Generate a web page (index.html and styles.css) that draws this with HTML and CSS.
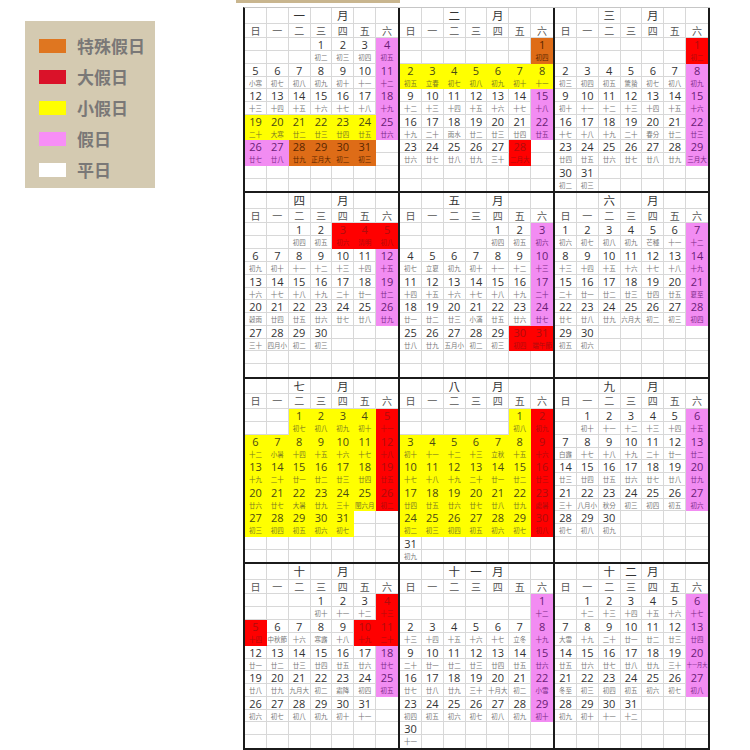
FILE: index.html
```html
<!DOCTYPE html>
<html lang="zh-Hant">
<head>
<meta charset="utf-8">
<title>2025 行事曆</title>
<link rel="stylesheet" href="styles.css">
</head>
<body>
<div class="page">
  <div class="legend">
    <div class="item"><span class="sw sw-o"></span>特殊假日</div>
    <div class="item"><span class="sw sw-r"></span>大假日</div>
    <div class="item"><span class="sw sw-y"></span>小假日</div>
    <div class="item"><span class="sw sw-p"></span>假日</div>
    <div class="item"><span class="sw sw-w"></span>平日</div>
  </div>
  <div class="main">
    <div class="strip"></div>
    <div class="cal">
      <!-- 一月 -->
      <div class="month">
        <div class="t"></div><div class="t"></div><div class="t">一</div><div class="t"></div><div class="t">月</div><div class="t"></div><div class="t"></div>
        <div class="w">日</div><div class="w">一</div><div class="w">二</div><div class="w">三</div><div class="w">四</div><div class="w">五</div><div class="w">六</div>
        <div class="d"></div><div class="d"></div><div class="d"></div><div class="d"><b>1</b><i>初二</i></div><div class="d"><b>2</b><i>初三</i></div><div class="d"><b>3</b><i>初四</i></div><div class="d p"><b>4</b><i>初五</i></div>
        <div class="d"><b>5</b><i>小寒</i></div><div class="d"><b>6</b><i>初七</i></div><div class="d"><b>7</b><i>初八</i></div><div class="d"><b>8</b><i>初九</i></div><div class="d"><b>9</b><i>初十</i></div><div class="d"><b>10</b><i>十一</i></div><div class="d p"><b>11</b><i>十二</i></div>
        <div class="d"><b>12</b><i>十三</i></div><div class="d"><b>13</b><i>十四</i></div><div class="d"><b>14</b><i>十五</i></div><div class="d"><b>15</b><i>十六</i></div><div class="d"><b>16</b><i>十七</i></div><div class="d"><b>17</b><i>十八</i></div><div class="d p"><b>18</b><i>十九</i></div>
        <div class="d y"><b>19</b><i>二十</i></div><div class="d y"><b>20</b><i>大寒</i></div><div class="d y"><b>21</b><i>廿二</i></div><div class="d y"><b>22</b><i>廿三</i></div><div class="d y"><b>23</b><i>廿四</i></div><div class="d y"><b>24</b><i>廿五</i></div><div class="d p"><b>25</b><i>廿六</i></div>
        <div class="d p"><b>26</b><i>廿七</i></div><div class="d p"><b>27</b><i>廿八</i></div><div class="d o"><b>28</b><i>廿九</i></div><div class="d o"><b>29</b><i>正月大</i></div><div class="d o"><b>30</b><i>初二</i></div><div class="d o"><b>31</b><i>初三</i></div><div class="d"></div>
        <div class="d"></div><div class="d"></div><div class="d"></div><div class="d"></div><div class="d"></div><div class="d"></div><div class="d"></div>
      </div>
      <!-- 二月 -->
      <div class="month">
        <div class="t"></div><div class="t"></div><div class="t">二</div><div class="t"></div><div class="t">月</div><div class="t"></div><div class="t"></div>
        <div class="w">日</div><div class="w">一</div><div class="w">二</div><div class="w">三</div><div class="w">四</div><div class="w">五</div><div class="w">六</div>
        <div class="d"></div><div class="d"></div><div class="d"></div><div class="d"></div><div class="d"></div><div class="d"></div><div class="d o"><b>1</b><i>初四</i></div>
        <div class="d y"><b>2</b><i>初五</i></div><div class="d y"><b>3</b><i>立春</i></div><div class="d y"><b>4</b><i>初七</i></div><div class="d y"><b>5</b><i>初八</i></div><div class="d y"><b>6</b><i>初九</i></div><div class="d y"><b>7</b><i>初十</i></div><div class="d y"><b>8</b><i>十一</i></div>
        <div class="d"><b>9</b><i>十二</i></div><div class="d"><b>10</b><i>十三</i></div><div class="d"><b>11</b><i>十四</i></div><div class="d"><b>12</b><i>十五</i></div><div class="d"><b>13</b><i>十六</i></div><div class="d"><b>14</b><i>十七</i></div><div class="d p"><b>15</b><i>十八</i></div>
        <div class="d"><b>16</b><i>十九</i></div><div class="d"><b>17</b><i>二十</i></div><div class="d"><b>18</b><i>雨水</i></div><div class="d"><b>19</b><i>廿二</i></div><div class="d"><b>20</b><i>廿三</i></div><div class="d"><b>21</b><i>廿四</i></div><div class="d p"><b>22</b><i>廿五</i></div>
        <div class="d"><b>23</b><i>廿六</i></div><div class="d"><b>24</b><i>廿七</i></div><div class="d"><b>25</b><i>廿八</i></div><div class="d"><b>26</b><i>廿九</i></div><div class="d"><b>27</b><i>三十</i></div><div class="d r"><b>28</b><i>二月大</i></div><div class="d"></div>
        <div class="d"></div><div class="d"></div><div class="d"></div><div class="d"></div><div class="d"></div><div class="d"></div><div class="d"></div>
      </div>
      <!-- 三月 -->
      <div class="month">
        <div class="t"></div><div class="t"></div><div class="t">三</div><div class="t"></div><div class="t">月</div><div class="t"></div><div class="t"></div>
        <div class="w">日</div><div class="w">一</div><div class="w">二</div><div class="w">三</div><div class="w">四</div><div class="w">五</div><div class="w">六</div>
        <div class="d"></div><div class="d"></div><div class="d"></div><div class="d"></div><div class="d"></div><div class="d"></div><div class="d r"><b>1</b><i>初二</i></div>
        <div class="d"><b>2</b><i>初三</i></div><div class="d"><b>3</b><i>初四</i></div><div class="d"><b>4</b><i>初五</i></div><div class="d"><b>5</b><i>驚蟄</i></div><div class="d"><b>6</b><i>初七</i></div><div class="d"><b>7</b><i>初八</i></div><div class="d p"><b>8</b><i>初九</i></div>
        <div class="d"><b>9</b><i>初十</i></div><div class="d"><b>10</b><i>十一</i></div><div class="d"><b>11</b><i>十二</i></div><div class="d"><b>12</b><i>十三</i></div><div class="d"><b>13</b><i>十四</i></div><div class="d"><b>14</b><i>十五</i></div><div class="d p"><b>15</b><i>十六</i></div>
        <div class="d"><b>16</b><i>十七</i></div><div class="d"><b>17</b><i>十八</i></div><div class="d"><b>18</b><i>十九</i></div><div class="d"><b>19</b><i>二十</i></div><div class="d"><b>20</b><i>春分</i></div><div class="d"><b>21</b><i>廿二</i></div><div class="d p"><b>22</b><i>廿三</i></div>
        <div class="d"><b>23</b><i>廿四</i></div><div class="d"><b>24</b><i>廿五</i></div><div class="d"><b>25</b><i>廿六</i></div><div class="d"><b>26</b><i>廿七</i></div><div class="d"><b>27</b><i>廿八</i></div><div class="d"><b>28</b><i>廿九</i></div><div class="d p"><b>29</b><i>三月大</i></div>
        <div class="d"><b>30</b><i>初二</i></div><div class="d"><b>31</b><i>初三</i></div><div class="d"></div><div class="d"></div><div class="d"></div><div class="d"></div><div class="d"></div>
      </div>
      <!-- 四月 -->
      <div class="month">
        <div class="t"></div><div class="t"></div><div class="t">四</div><div class="t"></div><div class="t">月</div><div class="t"></div><div class="t"></div>
        <div class="w">日</div><div class="w">一</div><div class="w">二</div><div class="w">三</div><div class="w">四</div><div class="w">五</div><div class="w">六</div>
        <div class="d"></div><div class="d"></div><div class="d"><b>1</b><i>初四</i></div><div class="d"><b>2</b><i>初五</i></div><div class="d r"><b>3</b><i>初六</i></div><div class="d r"><b>4</b><i>清明</i></div><div class="d r"><b>5</b><i>初八</i></div>
        <div class="d"><b>6</b><i>初九</i></div><div class="d"><b>7</b><i>初十</i></div><div class="d"><b>8</b><i>十一</i></div><div class="d"><b>9</b><i>十二</i></div><div class="d"><b>10</b><i>十三</i></div><div class="d"><b>11</b><i>十四</i></div><div class="d p"><b>12</b><i>十五</i></div>
        <div class="d"><b>13</b><i>十六</i></div><div class="d"><b>14</b><i>十七</i></div><div class="d"><b>15</b><i>十八</i></div><div class="d"><b>16</b><i>十九</i></div><div class="d"><b>17</b><i>二十</i></div><div class="d"><b>18</b><i>廿一</i></div><div class="d p"><b>19</b><i>廿二</i></div>
        <div class="d"><b>20</b><i>穀雨</i></div><div class="d"><b>21</b><i>廿四</i></div><div class="d"><b>22</b><i>廿五</i></div><div class="d"><b>23</b><i>廿六</i></div><div class="d"><b>24</b><i>廿七</i></div><div class="d"><b>25</b><i>廿八</i></div><div class="d p"><b>26</b><i>廿九</i></div>
        <div class="d"><b>27</b><i>三十</i></div><div class="d"><b>28</b><i>四月小</i></div><div class="d"><b>29</b><i>初二</i></div><div class="d"><b>30</b><i>初三</i></div><div class="d"></div><div class="d"></div><div class="d"></div>
        <div class="d"></div><div class="d"></div><div class="d"></div><div class="d"></div><div class="d"></div><div class="d"></div><div class="d"></div>
      </div>
      <!-- 五月 -->
      <div class="month">
        <div class="t"></div><div class="t"></div><div class="t">五</div><div class="t"></div><div class="t">月</div><div class="t"></div><div class="t"></div>
        <div class="w">日</div><div class="w">一</div><div class="w">二</div><div class="w">三</div><div class="w">四</div><div class="w">五</div><div class="w">六</div>
        <div class="d"></div><div class="d"></div><div class="d"></div><div class="d"></div><div class="d"><b>1</b><i>初四</i></div><div class="d"><b>2</b><i>初五</i></div><div class="d p"><b>3</b><i>初六</i></div>
        <div class="d"><b>4</b><i>初七</i></div><div class="d"><b>5</b><i>立夏</i></div><div class="d"><b>6</b><i>初九</i></div><div class="d"><b>7</b><i>初十</i></div><div class="d"><b>8</b><i>十一</i></div><div class="d"><b>9</b><i>十二</i></div><div class="d p"><b>10</b><i>十三</i></div>
        <div class="d"><b>11</b><i>十四</i></div><div class="d"><b>12</b><i>十五</i></div><div class="d"><b>13</b><i>十六</i></div><div class="d"><b>14</b><i>十七</i></div><div class="d"><b>15</b><i>十八</i></div><div class="d"><b>16</b><i>十九</i></div><div class="d p"><b>17</b><i>二十</i></div>
        <div class="d"><b>18</b><i>廿一</i></div><div class="d"><b>19</b><i>廿二</i></div><div class="d"><b>20</b><i>廿三</i></div><div class="d"><b>21</b><i>小滿</i></div><div class="d"><b>22</b><i>廿五</i></div><div class="d"><b>23</b><i>廿六</i></div><div class="d p"><b>24</b><i>廿七</i></div>
        <div class="d"><b>25</b><i>廿八</i></div><div class="d"><b>26</b><i>廿九</i></div><div class="d"><b>27</b><i>五月小</i></div><div class="d"><b>28</b><i>初二</i></div><div class="d"><b>29</b><i>初三</i></div><div class="d r"><b>30</b><i>初四</i></div><div class="d r"><b>31</b><i>端午節</i></div>
        <div class="d"></div><div class="d"></div><div class="d"></div><div class="d"></div><div class="d"></div><div class="d"></div><div class="d"></div>
      </div>
      <!-- 六月 -->
      <div class="month">
        <div class="t"></div><div class="t"></div><div class="t">六</div><div class="t"></div><div class="t">月</div><div class="t"></div><div class="t"></div>
        <div class="w">日</div><div class="w">一</div><div class="w">二</div><div class="w">三</div><div class="w">四</div><div class="w">五</div><div class="w">六</div>
        <div class="d"><b>1</b><i>初六</i></div><div class="d"><b>2</b><i>初七</i></div><div class="d"><b>3</b><i>初八</i></div><div class="d"><b>4</b><i>初九</i></div><div class="d"><b>5</b><i>芒種</i></div><div class="d"><b>6</b><i>十一</i></div><div class="d p"><b>7</b><i>十二</i></div>
        <div class="d"><b>8</b><i>十三</i></div><div class="d"><b>9</b><i>十四</i></div><div class="d"><b>10</b><i>十五</i></div><div class="d"><b>11</b><i>十六</i></div><div class="d"><b>12</b><i>十七</i></div><div class="d"><b>13</b><i>十八</i></div><div class="d p"><b>14</b><i>十九</i></div>
        <div class="d"><b>15</b><i>二十</i></div><div class="d"><b>16</b><i>廿一</i></div><div class="d"><b>17</b><i>廿二</i></div><div class="d"><b>18</b><i>廿三</i></div><div class="d"><b>19</b><i>廿四</i></div><div class="d"><b>20</b><i>廿五</i></div><div class="d p"><b>21</b><i>夏至</i></div>
        <div class="d"><b>22</b><i>廿七</i></div><div class="d"><b>23</b><i>廿八</i></div><div class="d"><b>24</b><i>廿九</i></div><div class="d"><b>25</b><i>六月大</i></div><div class="d"><b>26</b><i>初二</i></div><div class="d"><b>27</b><i>初三</i></div><div class="d p"><b>28</b><i>初四</i></div>
        <div class="d"><b>29</b><i>初五</i></div><div class="d"><b>30</b><i>初六</i></div><div class="d"></div><div class="d"></div><div class="d"></div><div class="d"></div><div class="d"></div>
        <div class="d"></div><div class="d"></div><div class="d"></div><div class="d"></div><div class="d"></div><div class="d"></div><div class="d"></div>
      </div>
      <!-- 七月 -->
      <div class="month">
        <div class="t"></div><div class="t"></div><div class="t">七</div><div class="t"></div><div class="t">月</div><div class="t"></div><div class="t"></div>
        <div class="w">日</div><div class="w">一</div><div class="w">二</div><div class="w">三</div><div class="w">四</div><div class="w">五</div><div class="w">六</div>
        <div class="d"></div><div class="d"></div><div class="d y"><b>1</b><i>初七</i></div><div class="d y"><b>2</b><i>初八</i></div><div class="d y"><b>3</b><i>初九</i></div><div class="d y"><b>4</b><i>初十</i></div><div class="d r"><b>5</b><i>十一</i></div>
        <div class="d y"><b>6</b><i>十二</i></div><div class="d y"><b>7</b><i>小暑</i></div><div class="d y"><b>8</b><i>十四</i></div><div class="d y"><b>9</b><i>十五</i></div><div class="d y"><b>10</b><i>十六</i></div><div class="d y"><b>11</b><i>十七</i></div><div class="d r"><b>12</b><i>十八</i></div>
        <div class="d y"><b>13</b><i>十九</i></div><div class="d y"><b>14</b><i>二十</i></div><div class="d y"><b>15</b><i>廿一</i></div><div class="d y"><b>16</b><i>廿二</i></div><div class="d y"><b>17</b><i>廿三</i></div><div class="d y"><b>18</b><i>廿四</i></div><div class="d r"><b>19</b><i>廿五</i></div>
        <div class="d y"><b>20</b><i>廿六</i></div><div class="d y"><b>21</b><i>廿七</i></div><div class="d y"><b>22</b><i>大暑</i></div><div class="d y"><b>23</b><i>廿九</i></div><div class="d y"><b>24</b><i>三十</i></div><div class="d y"><b>25</b><i>閏六月</i></div><div class="d r"><b>26</b><i>初二</i></div>
        <div class="d y"><b>27</b><i>初三</i></div><div class="d y"><b>28</b><i>初四</i></div><div class="d y"><b>29</b><i>初五</i></div><div class="d y"><b>30</b><i>初六</i></div><div class="d y"><b>31</b><i>初七</i></div><div class="d"></div><div class="d"></div>
        <div class="d"></div><div class="d"></div><div class="d"></div><div class="d"></div><div class="d"></div><div class="d"></div><div class="d"></div>
      </div>
      <!-- 八月 -->
      <div class="month">
        <div class="t"></div><div class="t"></div><div class="t">八</div><div class="t"></div><div class="t">月</div><div class="t"></div><div class="t"></div>
        <div class="w">日</div><div class="w">一</div><div class="w">二</div><div class="w">三</div><div class="w">四</div><div class="w">五</div><div class="w">六</div>
        <div class="d"></div><div class="d"></div><div class="d"></div><div class="d"></div><div class="d"></div><div class="d y"><b>1</b><i>初八</i></div><div class="d r"><b>2</b><i>初九</i></div>
        <div class="d y"><b>3</b><i>初十</i></div><div class="d y"><b>4</b><i>十一</i></div><div class="d y"><b>5</b><i>十二</i></div><div class="d y"><b>6</b><i>十三</i></div><div class="d y"><b>7</b><i>立秋</i></div><div class="d y"><b>8</b><i>十五</i></div><div class="d r"><b>9</b><i>十六</i></div>
        <div class="d y"><b>10</b><i>十七</i></div><div class="d y"><b>11</b><i>十八</i></div><div class="d y"><b>12</b><i>十九</i></div><div class="d y"><b>13</b><i>二十</i></div><div class="d y"><b>14</b><i>廿一</i></div><div class="d y"><b>15</b><i>廿二</i></div><div class="d r"><b>16</b><i>廿三</i></div>
        <div class="d y"><b>17</b><i>廿四</i></div><div class="d y"><b>18</b><i>廿五</i></div><div class="d y"><b>19</b><i>廿六</i></div><div class="d y"><b>20</b><i>廿七</i></div><div class="d y"><b>21</b><i>廿八</i></div><div class="d y"><b>22</b><i>廿九</i></div><div class="d r"><b>23</b><i>處暑</i></div>
        <div class="d y"><b>24</b><i>初二</i></div><div class="d y"><b>25</b><i>初三</i></div><div class="d y"><b>26</b><i>初四</i></div><div class="d y"><b>27</b><i>初五</i></div><div class="d y"><b>28</b><i>初六</i></div><div class="d y"><b>29</b><i>初七</i></div><div class="d r"><b>30</b><i>初八</i></div>
        <div class="d"><b>31</b><i>初九</i></div><div class="d"></div><div class="d"></div><div class="d"></div><div class="d"></div><div class="d"></div><div class="d"></div>
      </div>
      <!-- 九月 -->
      <div class="month">
        <div class="t"></div><div class="t"></div><div class="t">九</div><div class="t"></div><div class="t">月</div><div class="t"></div><div class="t"></div>
        <div class="w">日</div><div class="w">一</div><div class="w">二</div><div class="w">三</div><div class="w">四</div><div class="w">五</div><div class="w">六</div>
        <div class="d"></div><div class="d"><b>1</b><i>初十</i></div><div class="d"><b>2</b><i>十一</i></div><div class="d"><b>3</b><i>十二</i></div><div class="d"><b>4</b><i>十三</i></div><div class="d"><b>5</b><i>十四</i></div><div class="d p"><b>6</b><i>十五</i></div>
        <div class="d"><b>7</b><i>白露</i></div><div class="d"><b>8</b><i>十七</i></div><div class="d"><b>9</b><i>十八</i></div><div class="d"><b>10</b><i>十九</i></div><div class="d"><b>11</b><i>二十</i></div><div class="d"><b>12</b><i>廿一</i></div><div class="d p"><b>13</b><i>廿二</i></div>
        <div class="d"><b>14</b><i>廿三</i></div><div class="d"><b>15</b><i>廿四</i></div><div class="d"><b>16</b><i>廿五</i></div><div class="d"><b>17</b><i>廿六</i></div><div class="d"><b>18</b><i>廿七</i></div><div class="d"><b>19</b><i>廿八</i></div><div class="d p"><b>20</b><i>廿九</i></div>
        <div class="d"><b>21</b><i>三十</i></div><div class="d"><b>22</b><i>八月小</i></div><div class="d"><b>23</b><i>秋分</i></div><div class="d"><b>24</b><i>初三</i></div><div class="d"><b>25</b><i>初四</i></div><div class="d"><b>26</b><i>初五</i></div><div class="d p"><b>27</b><i>初六</i></div>
        <div class="d"><b>28</b><i>初七</i></div><div class="d"><b>29</b><i>初八</i></div><div class="d"><b>30</b><i>初九</i></div><div class="d"></div><div class="d"></div><div class="d"></div><div class="d"></div>
        <div class="d"></div><div class="d"></div><div class="d"></div><div class="d"></div><div class="d"></div><div class="d"></div><div class="d"></div>
      </div>
      <!-- 十月 -->
      <div class="month">
        <div class="t"></div><div class="t"></div><div class="t">十</div><div class="t"></div><div class="t">月</div><div class="t"></div><div class="t"></div>
        <div class="w">日</div><div class="w">一</div><div class="w">二</div><div class="w">三</div><div class="w">四</div><div class="w">五</div><div class="w">六</div>
        <div class="d"></div><div class="d"></div><div class="d"></div><div class="d"><b>1</b><i>初十</i></div><div class="d"><b>2</b><i>十一</i></div><div class="d"><b>3</b><i>十二</i></div><div class="d r"><b>4</b><i>十三</i></div>
        <div class="d r"><b>5</b><i>十四</i></div><div class="d"><b>6</b><i>中秋節</i></div><div class="d"><b>7</b><i>十六</i></div><div class="d"><b>8</b><i>寒露</i></div><div class="d"><b>9</b><i>十八</i></div><div class="d r"><b>10</b><i>十九</i></div><div class="d r"><b>11</b><i>二十</i></div>
        <div class="d"><b>12</b><i>廿一</i></div><div class="d"><b>13</b><i>廿二</i></div><div class="d"><b>14</b><i>廿三</i></div><div class="d"><b>15</b><i>廿四</i></div><div class="d"><b>16</b><i>廿五</i></div><div class="d"><b>17</b><i>廿六</i></div><div class="d p"><b>18</b><i>廿七</i></div>
        <div class="d"><b>19</b><i>廿八</i></div><div class="d"><b>20</b><i>廿九</i></div><div class="d"><b>21</b><i>九月大</i></div><div class="d"><b>22</b><i>初二</i></div><div class="d"><b>23</b><i>霜降</i></div><div class="d"><b>24</b><i>初四</i></div><div class="d p"><b>25</b><i>初五</i></div>
        <div class="d"><b>26</b><i>初六</i></div><div class="d"><b>27</b><i>初七</i></div><div class="d"><b>28</b><i>初八</i></div><div class="d"><b>29</b><i>初九</i></div><div class="d"><b>30</b><i>初十</i></div><div class="d"><b>31</b><i>十一</i></div><div class="d"></div>
        <div class="d"></div><div class="d"></div><div class="d"></div><div class="d"></div><div class="d"></div><div class="d"></div><div class="d"></div>
      </div>
      <!-- 十一月 -->
      <div class="month">
        <div class="t"></div><div class="t"></div><div class="t">十</div><div class="t">一</div><div class="t">月</div><div class="t"></div><div class="t"></div>
        <div class="w">日</div><div class="w">一</div><div class="w">二</div><div class="w">三</div><div class="w">四</div><div class="w">五</div><div class="w">六</div>
        <div class="d"></div><div class="d"></div><div class="d"></div><div class="d"></div><div class="d"></div><div class="d"></div><div class="d p"><b>1</b><i>十二</i></div>
        <div class="d"><b>2</b><i>十三</i></div><div class="d"><b>3</b><i>十四</i></div><div class="d"><b>4</b><i>十五</i></div><div class="d"><b>5</b><i>十六</i></div><div class="d"><b>6</b><i>十七</i></div><div class="d"><b>7</b><i>立冬</i></div><div class="d p"><b>8</b><i>十九</i></div>
        <div class="d"><b>9</b><i>二十</i></div><div class="d"><b>10</b><i>廿一</i></div><div class="d"><b>11</b><i>廿二</i></div><div class="d"><b>12</b><i>廿三</i></div><div class="d"><b>13</b><i>廿四</i></div><div class="d"><b>14</b><i>廿五</i></div><div class="d p"><b>15</b><i>廿六</i></div>
        <div class="d"><b>16</b><i>廿七</i></div><div class="d"><b>17</b><i>廿八</i></div><div class="d"><b>18</b><i>廿九</i></div><div class="d"><b>19</b><i>三十</i></div><div class="d"><b>20</b><i>十月大</i></div><div class="d"><b>21</b><i>初二</i></div><div class="d p"><b>22</b><i>小雪</i></div>
        <div class="d"><b>23</b><i>初四</i></div><div class="d"><b>24</b><i>初五</i></div><div class="d"><b>25</b><i>初六</i></div><div class="d"><b>26</b><i>初七</i></div><div class="d"><b>27</b><i>初八</i></div><div class="d"><b>28</b><i>初九</i></div><div class="d p"><b>29</b><i>初十</i></div>
        <div class="d"><b>30</b><i>十一</i></div><div class="d"></div><div class="d"></div><div class="d"></div><div class="d"></div><div class="d"></div><div class="d"></div>
      </div>
      <!-- 十二月 -->
      <div class="month">
        <div class="t"></div><div class="t"></div><div class="t">十</div><div class="t">二</div><div class="t">月</div><div class="t"></div><div class="t"></div>
        <div class="w">日</div><div class="w">一</div><div class="w">二</div><div class="w">三</div><div class="w">四</div><div class="w">五</div><div class="w">六</div>
        <div class="d"></div><div class="d"><b>1</b><i>十二</i></div><div class="d"><b>2</b><i>十三</i></div><div class="d"><b>3</b><i>十四</i></div><div class="d"><b>4</b><i>十五</i></div><div class="d"><b>5</b><i>十六</i></div><div class="d p"><b>6</b><i>十七</i></div>
        <div class="d"><b>7</b><i>大雪</i></div><div class="d"><b>8</b><i>十九</i></div><div class="d"><b>9</b><i>二十</i></div><div class="d"><b>10</b><i>廿一</i></div><div class="d"><b>11</b><i>廿二</i></div><div class="d"><b>12</b><i>廿三</i></div><div class="d p"><b>13</b><i>廿四</i></div>
        <div class="d"><b>14</b><i>廿五</i></div><div class="d"><b>15</b><i>廿六</i></div><div class="d"><b>16</b><i>廿七</i></div><div class="d"><b>17</b><i>廿八</i></div><div class="d"><b>18</b><i>廿九</i></div><div class="d"><b>19</b><i>三十</i></div><div class="d p"><b>20</b><i class="sm">十一月大</i></div>
        <div class="d"><b>21</b><i>冬至</i></div><div class="d"><b>22</b><i>初三</i></div><div class="d"><b>23</b><i>初四</i></div><div class="d"><b>24</b><i>初五</i></div><div class="d"><b>25</b><i>初六</i></div><div class="d"><b>26</b><i>初七</i></div><div class="d p"><b>27</b><i>初八</i></div>
        <div class="d"><b>28</b><i>初九</i></div><div class="d"><b>29</b><i>初十</i></div><div class="d"><b>30</b><i>十一</i></div><div class="d"><b>31</b><i>十二</i></div><div class="d"></div><div class="d"></div><div class="d"></div>
        <div class="d"></div><div class="d"></div><div class="d"></div><div class="d"></div><div class="d"></div><div class="d"></div><div class="d"></div>
      </div>
    </div>
  </div>
</div>
</body>
</html>
```

FILE: styles.css
```css
html, body {
  margin: 0;
  background: #fff;
}
body {
  font-family: "Noto Sans", "Noto Sans CJK TC", sans-serif;
}
.page {
  display: flex;
  align-items: flex-start;
}
.legend {
  margin: 21px 0 0 25px;
  width: 130px;
  height: 167px;
  box-sizing: border-box;
  padding: 9px 0 0 14px;
  background: #d4cab1;
}
.item {
  display: flex;
  align-items: center;
  gap: 11px;
  height: 31px;
  font-family: "Noto Sans CJK TC", sans-serif;
  font-size: 17px;
  font-weight: bold;
  color: #7a7877;
}
.sw {
  width: 27px;
  height: 14px;
  flex: none;
}
.sw-o { background: #df7620; }
.sw-r { background: #da1229; }
.sw-y { background: #ffff00; }
.sw-p { background: #f78ef6; }
.sw-w { background: #ffffff; }

.main {
  margin-left: 88px;
}
.strip {
  height: 3px;
  width: 164px;
  margin-left: -7px;
  background: #c9b68f;
}
.cal {
  margin-top: 4px;
  display: grid;
  grid-template-columns: repeat(3, 155px);
  border-left: 2px solid #1b1b1b;
  border-top: 1px solid #c6c6c6;
}
.month {
  box-sizing: border-box;
  width: 155px;
  display: grid;
  grid-template-columns: repeat(7, 1fr);
  grid-template-rows: 15.5px 14.5px repeat(6, 25.58px);
  border-right: 2px solid #1b1b1b;
  border-bottom: 2px solid #1b1b1b;
}
.month > div {
  box-sizing: border-box;
  border-right: 1px solid #d8d8d8;
  border-bottom: 1px solid #d8d8d8;
  text-align: center;
  min-width: 0;
}
.month > div:nth-child(7n) {
  border-right: 0;
}
.month > div:nth-last-child(-n+7) {
  border-bottom: 0;
}
.t {
  font-family: "Noto Sans CJK TC", sans-serif;
  font-size: 11.5px;
  line-height: 15px;
  color: #333;
}
.w {
  font-family: "Noto Sans CJK TC", sans-serif;
  font-size: 10px;
  line-height: 14px;
  color: #555;
}
.d {
  display: flex;
  flex-direction: column;
  background: linear-gradient(to bottom, transparent 12px, #d8d8d8 12px, #d8d8d8 13px, transparent 13px);
}
.d b {
  display: block;
  height: 12px;
  line-height: 13px;
  font-family: "Open Sans", "Noto Sans", sans-serif;
  font-weight: normal;
  font-size: 11px;
  color: #333;
}
.d i {
  display: block;
  font-style: normal;
  font-family: "Noto Sans CJK TC", sans-serif;
  font-size: 6.5px;
  line-height: 12px;
  margin-top: 1px;
  color: #777;
  white-space: nowrap;
}
.d i.sm {
  font-size: 5.2px;
}
.d.y { background: #ffff00; border-color: transparent; }
.d.o { background: #de6c17; border-color: transparent; }
.d.r { background: #ff0000; border-color: transparent; }
.d.p { background: #f28cf2; border-color: transparent; }
.d.y b { color: #4a4a14; }
.d.y i { color: #7a7a22; }
.d.o b, .d.o i { color: #5a2600; }
.d.r b, .d.r i { color: #b00c0c; }
.d.p b { color: #6a1c76; }
.d.p i { color: #7c2a88; }
```
